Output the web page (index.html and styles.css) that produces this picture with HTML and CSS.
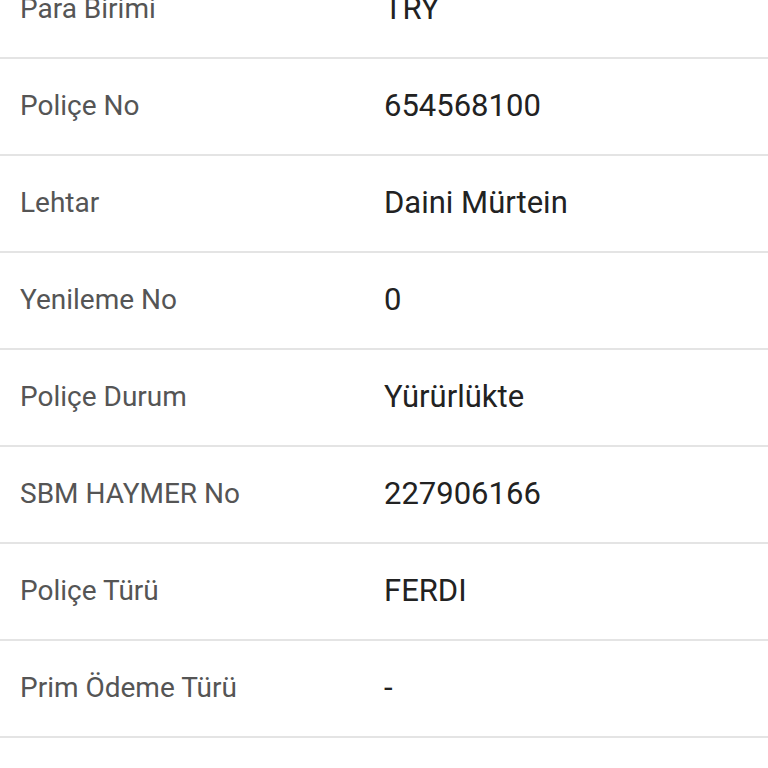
FILE: index.html
```html
<!DOCTYPE html>
<html lang="tr">
<head>
  <meta charset="UTF-8" />
  <meta name="viewport" content="width=device-width, initial-scale=1.0"/>
  <title>Poliçe Detayı</title>
  <link rel="stylesheet" href="styles.css">
</head>
<body>

  <div class="details">
    <div class="row"><div class="label">Para Birimi</div><div class="value">TRY</div></div>
    <div class="row"><div class="label">Poliçe No</div><div class="value">654568100</div></div>
    <div class="row"><div class="label">Lehtar</div><div class="value">Daini Mürtein</div></div>
    <div class="row"><div class="label">Yenileme No</div><div class="value">0</div></div>
    <div class="row"><div class="label">Poliçe Durum</div><div class="value">Yürürlükte</div></div>
    <div class="row"><div class="label">SBM HAYMER No</div><div class="value">227906166</div></div>
    <div class="row"><div class="label">Poliçe Türü</div><div class="value">FERDI</div></div>
    <div class="row"><div class="label">Prim Ödeme Türü</div><div class="value">-</div></div>
  </div>

</body>
</html>
```

FILE: styles.css
```css
body {
  margin: 0;
  padding: 0;
  font-family: Roboto, 'Noto Sans', sans-serif;
  background: #ffffff;
  overflow: hidden;
}

.details {
  margin-top: -38px;
}

.row {
  display: grid;
  grid-template-columns: 384px 1fr;
  align-items: center;
  height: 92px;
  padding-bottom: 3px;
  border-bottom: 2px solid #e4e4e4;
}

.label {
  padding-left: 20px;
  font-size: 28px;
  color: #555555;
}

.value {
  font-size: 31px;
  color: #222222;
}
```
